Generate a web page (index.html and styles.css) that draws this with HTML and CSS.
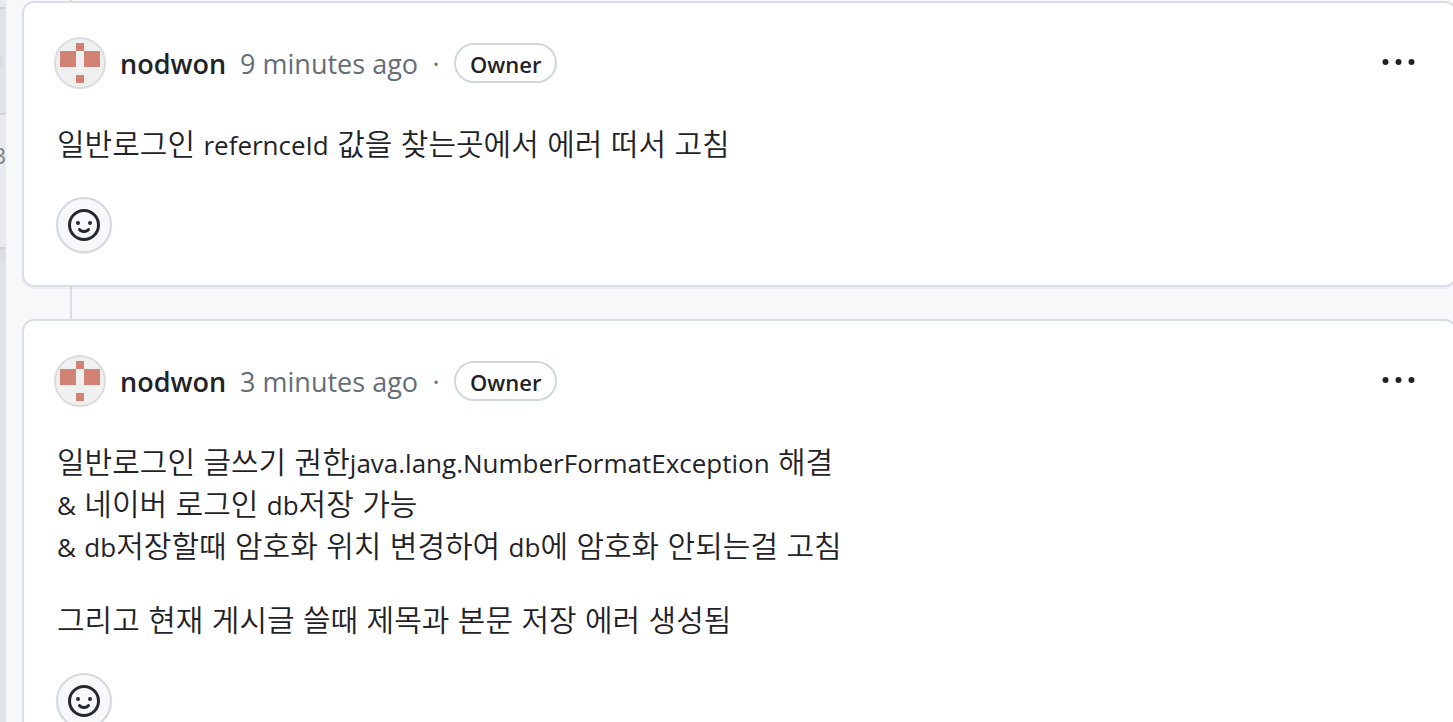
FILE: index.html
```html
<!DOCTYPE html>
<html lang="ko">
<head>
<meta charset="utf-8">
<meta name="viewport" content="width=device-width, initial-scale=1">
<title>Comments</title>
<link rel="stylesheet" href="styles.css">
</head>
<body>
<svg class="sprite" aria-hidden="true">
  <symbol id="avatar" viewBox="0 0 52 52">
    <circle cx="26" cy="26" r="25" fill="#f0f0f0" stroke="#dcdcde" stroke-width="2"/>
    <path fill="#d18275" d="M22 6h8v8h-8zM6 14h16v16H6zM30 14h16v16H30zM22 38h8v8h-8z"/>
  </symbol>
  <symbol id="smiley" viewBox="0 0 16 16">
    <path fill="currentColor" d="M8 0a8 8 0 1 1 0 16A8 8 0 0 1 8 0ZM1.5 8a6.5 6.5 0 1 0 13 0 6.5 6.5 0 0 0-13 0Zm3.82 1.636a.75.75 0 0 1 1.038.175l.007.009c.103.118.22.222.35.31.264.178.683.37 1.285.37.602 0 1.02-.192 1.285-.371.13-.088.247-.192.35-.31l.007-.008a.75.75 0 0 1 1.222.87l-.022-.015c.02.013.021.015.021.015v.001l-.001.002-.002.003-.005.007-.014.019a2.066 2.066 0 0 1-.184.213c-.16.166-.338.316-.53.445-.63.418-1.37.638-2.127.629-.946 0-1.652-.308-2.126-.63a3.331 3.331 0 0 1-.715-.657l-.014-.02-.005-.006-.002-.003v-.002h-.001l.613-.432-.614.43a.75.75 0 0 1 .183-1.044ZM12 7a1 1 0 1 1-2 0 1 1 0 0 1 2 0ZM5 8a1 1 0 1 1 0-2 1 1 0 0 1 0 2Z"/>
  </symbol>
  <symbol id="dots" viewBox="0 0 32 6">
    <circle cx="3" cy="3" r="3" fill="currentColor"/>
    <circle cx="16" cy="3" r="3" fill="currentColor"/>
    <circle cx="29" cy="3" r="3" fill="currentColor"/>
  </symbol>
</svg>
<div class="page">
  <aside class="backdrop">
    <div class="backdrop-top"></div>
    <div class="backdrop-tabs"><span class="chip"></span></div>
    <div class="backdrop-row"><span>3</span></div>
    <div class="backdrop-rest"></div>
  </aside>
  <main class="timeline">
    <article class="comment">
      <header class="comment-header">
        <svg class="avatar" role="img" aria-label="nodwon avatar"><use href="#avatar"/></svg>
        <a class="author" href="#">nodwon</a>
        <a class="time" href="#">9 minutes ago</a>
        <span class="separator">·</span>
        <span class="badge">Owner</span>
        <button class="menu" type="button" aria-label="Comment actions"><svg class="dots"><use href="#dots"/></svg></button>
      </header>
      <div class="body">
        <p>일반로그인 <span class="latin">refernceId</span> 값을 찾는곳에서 에러 떠서 고침</p>
      </div>
      <button class="react" type="button" aria-label="Add reaction"><svg class="smiley"><use href="#smiley"/></svg></button>
    </article>
    <article class="comment">
      <header class="comment-header">
        <svg class="avatar" role="img" aria-label="nodwon avatar"><use href="#avatar"/></svg>
        <a class="author" href="#">nodwon</a>
        <a class="time" href="#">3 minutes ago</a>
        <span class="separator">·</span>
        <span class="badge">Owner</span>
        <button class="menu" type="button" aria-label="Comment actions"><svg class="dots"><use href="#dots"/></svg></button>
      </header>
      <div class="body">
        <p>일반로그인 글쓰기 권한<span class="latin">java.lang.NumberFormatException</span> 해결<br>
        <span class="latin">&amp;</span> 네이버 로그인 <span class="latin">db</span>저장 가능<br>
        <span class="latin">&amp;</span> <span class="latin">db</span>저장할때 암호화 위치 변경하여 <span class="latin">db</span>에 암호화 안되는걸 고침</p>
        <p>그리고 현재 게시글 쓸때 제목과 본문 저장 에러 생성됨</p>
      </div>
      <button class="react" type="button" aria-label="Add reaction"><svg class="smiley"><use href="#smiley"/></svg></button>
    </article>
  </main>
</div>
</body>
</html>
```
FILE: styles.css
```css
* { box-sizing: border-box; }

body {
  margin: 0;
  background: #f6f8fa;
  color: #1f2328;
  font-family: "Open Sans", "Noto Sans", "Noto Sans CJK KR", sans-serif;
  font-size: 27px;
}

.sprite { display: none; }

.page {
  display: flex;
  height: 100vh;
  overflow: hidden;
}

.backdrop {
  display: flex;
  flex: none;
  flex-direction: column;
  width: 6px;
  overflow: hidden;
  background: #e0e4e7;
  color: #7c838c;
}

.backdrop-top { height: 9px; border-bottom: 2px solid #ced4db; background: #e8eaed; }

.backdrop-tabs {
  display: flex;
  align-items: center;
  height: 106px;
  border-bottom: 2px solid #ced4db;
}

.chip {
  width: 24px;
  height: 24px;
  flex: none;
  margin-left: -21px;
  border-radius: 50%;
  background: #d8dce3;
}

.backdrop-row {
  display: flex;
  justify-content: flex-end;
  height: 134px;
  padding-top: 24px;
  border-bottom: 2px solid #d0d4d9;
  background: #e8eaed;
  font-size: 22px;
  line-height: 32px;
}

.backdrop-rest {
  height: 16px;
  background: linear-gradient(#d8dce0, #e0e4e7);
}

.timeline {
  display: flex;
  flex: 1;
  flex-direction: column;
  gap: 32px;
  min-width: 0;
  padding: 1px 0 0 16px;
  margin-right: -4px;
  background: linear-gradient(#d8dee4, #d8dee4) 64px 0 / 2px 100% no-repeat;
}

.comment {
  flex: none;
  padding: 34px 30px 32px;
  border: 2px solid #d8dee4;
  border-radius: 12px;
  background: #fff;
  box-shadow: 0 2px 0 #1f23280a;
}

.comment-header {
  display: flex;
  align-items: center;
  height: 52px;
}

.avatar { flex: none; width: 52px; height: 52px; margin-right: 14px; }

.author {
  margin-right: 14px;
  color: #1f2328;
  font-weight: 600;
  text-decoration: none;
}

.time { color: #656d76; text-decoration: none; }

.separator { width: 36px; color: #656d76; text-align: center; }

.badge {
  height: 40px;
  padding: 0 14px;
  border: 2px solid #d0d7e0;
  border-radius: 20px;
  font-size: 22px;
  font-weight: 600;
  line-height: 38px;
}

.menu {
  display: flex;
  margin-left: auto;
  padding: 10px 10px 12px;
  border: 0;
  background: none;
  color: #1f2328;
}

.dots { width: 33px; height: 6px; }

.body {
  display: flex;
  flex-direction: column;
  gap: 32px;
  padding: 32px 3px 34px;
  font-family: "Noto Sans CJK KR", sans-serif;
  font-size: 30px;
  font-weight: 350;
  line-height: 42px;
}

.body p { margin: 0; }

.latin {
  font-family: "Open Sans", "Noto Sans", sans-serif;
  font-size: 26px;
  font-weight: 400;
  line-height: 1;
}

.react {
  display: grid;
  place-items: center;
  width: 56px;
  height: 56px;
  margin-left: 2px;
  padding: 0;
  border: 2px solid #d5d8dd;
  border-radius: 50%;
  background: #f6f8fa;
  color: #24292f;
  box-shadow: 0 1px 1px #e9ebee;
}

.smiley { width: 32px; height: 32px; }
```
